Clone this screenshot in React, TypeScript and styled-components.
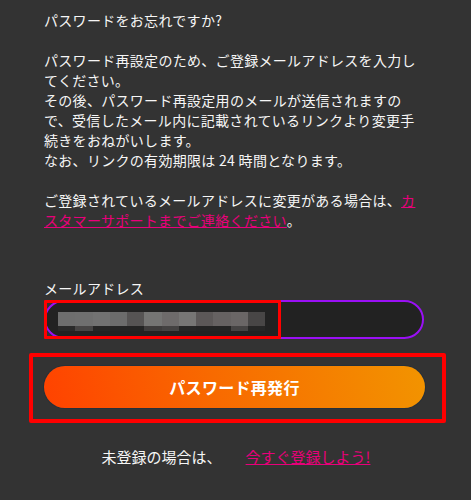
import React from "react";
import styled, { createGlobalStyle } from "styled-components";

const Global = createGlobalStyle`
  html, body {
    margin: 0;
    padding: 0;
    background: #333333;
  }
  body {
    font-family: "Noto Sans CJK JP", "Noto Sans", sans-serif;
    color: #f6f6f6;
  }
`;

const Page = styled.div`
  width: 380px;
  padding: 10px 0 30px 44px;
  display: flex;
  flex-direction: column;
`;

const Intro = styled.p`
  margin: 0;
  font-size: 14px;
  letter-spacing: 0.3px;
  line-height: 20px;
`;

const Link = styled.a`
  color: #e8007a;
  text-decoration: underline;
  cursor: pointer;
`;

const Label = styled.label`
  margin-top: 48px;
  font-size: 14px;
  letter-spacing: 0.3px;
  line-height: 20px;
`;

const InputWrap = styled.div`
  position: relative;
  margin-top: 2px;
`;

const Field = styled.div`
  box-sizing: border-box;
  height: 39px;
  width: 380px;
  border: 2px solid #9a10f5;
  border-radius: 20px;
  background: #222222;
  display: flex;
  align-items: center;
  padding-left: 12px;
`;

const Redacted = styled.div`
  display: grid;
  grid-template-columns: repeat(12, 17.25px);
  grid-template-rows: 14px 5px;
  margin-top: 3px;
`;

const Pixel = styled.div<{ $c: string }>`
  background: ${(p) => p.$c};
`;

const Highlight = styled.div<{ $w: number; $h: number; $t: number; $l: number; $b: number }>`
  position: absolute;
  box-sizing: border-box;
  left: ${(p) => p.$l}px;
  top: ${(p) => p.$t}px;
  width: ${(p) => p.$w}px;
  height: ${(p) => p.$h}px;
  border: ${(p) => p.$b}px solid #ff0000;
  border-radius: 1px;
  pointer-events: none;
`;

const ButtonFrame = styled.div`
  box-sizing: border-box;
  margin: 14px 0 0 -15px;
  width: 417px;
  height: 70px;
  border: 4px solid #ff0000;
  border-radius: 2px;
  padding: 9px 17px 10px 11px;
`;

const Submit = styled.button`
  display: block;
  width: 381px;
  height: 42px;
  border: none;
  border-radius: 21px;
  background: linear-gradient(75deg, #ff4200 0%, #f86a00 45%, #f29400 100%);
  box-shadow: 0 0 0 1px #26303a;
  color: #ffffff;
  font-family: "Noto Sans CJK JP", sans-serif;
  font-size: 16px;
  font-weight: 700;
  letter-spacing: 0.3px;
  padding: 0;
`;

const Footer = styled.div`
  margin-top: 24px;
  padding-left: 4px;
  display: flex;
  justify-content: center;
  gap: 24px;
  font-size: 15px;
  line-height: 20px;
`;

const pixelsTop = [
  "#6e6e6e", "#6f6f6f", "#727272", "#6c6c6c", "#565454", "#757574",
  "#6e6b6b", "#777675", "#5c5858", "#666262", "#6a6666", "#484646",
];
const pixelsBottom = [
  "#2a2a2a", "#474545", "#262626", "#242424", "#242424", "#3e3c3c",
  "#444242", "#262626", "#242424", "#242424", "#454343", "#262626",
];

export default function App() {
  return (
    <>
      <Global />
      <Page>
        <Intro>
          パスワードをお忘れですか?
          <br />
          <br />
          パスワード再設定のため、ご登録メールアドレスを入力してください。
          <br />
          その後、パスワード再設定用のメールが送信されますので、受信したメール内に記載されているリンクより変更手続きをおねがいします。
          <br />
          なお、リンクの有効期限は 24 時間となります。
          <br />
          <br />
          ご登録されているメールアドレスに変更がある場合は、
          <Link>カスタマーサポートまでご連絡ください</Link>。
        </Intro>
        <Label>メールアドレス</Label>
        <InputWrap>
          <Field>
            <Redacted>
              {pixelsTop.map((c, i) => (
                <Pixel key={"t" + i} $c={c} />
              ))}
              {pixelsBottom.map((c, i) => (
                <Pixel key={"b" + i} $c={c} />
              ))}
            </Redacted>
          </Field>
          <Highlight $l={0} $t={0} $w={237} $h={39} $b={3} />
        </InputWrap>
        <ButtonFrame>
          <Submit type="button">パスワード再発行</Submit>
        </ButtonFrame>
        <Footer>
          <span>未登録の場合は、</span>
          <Link>今すぐ登録しよう!</Link>
        </Footer>
      </Page>
    </>
  );
}
